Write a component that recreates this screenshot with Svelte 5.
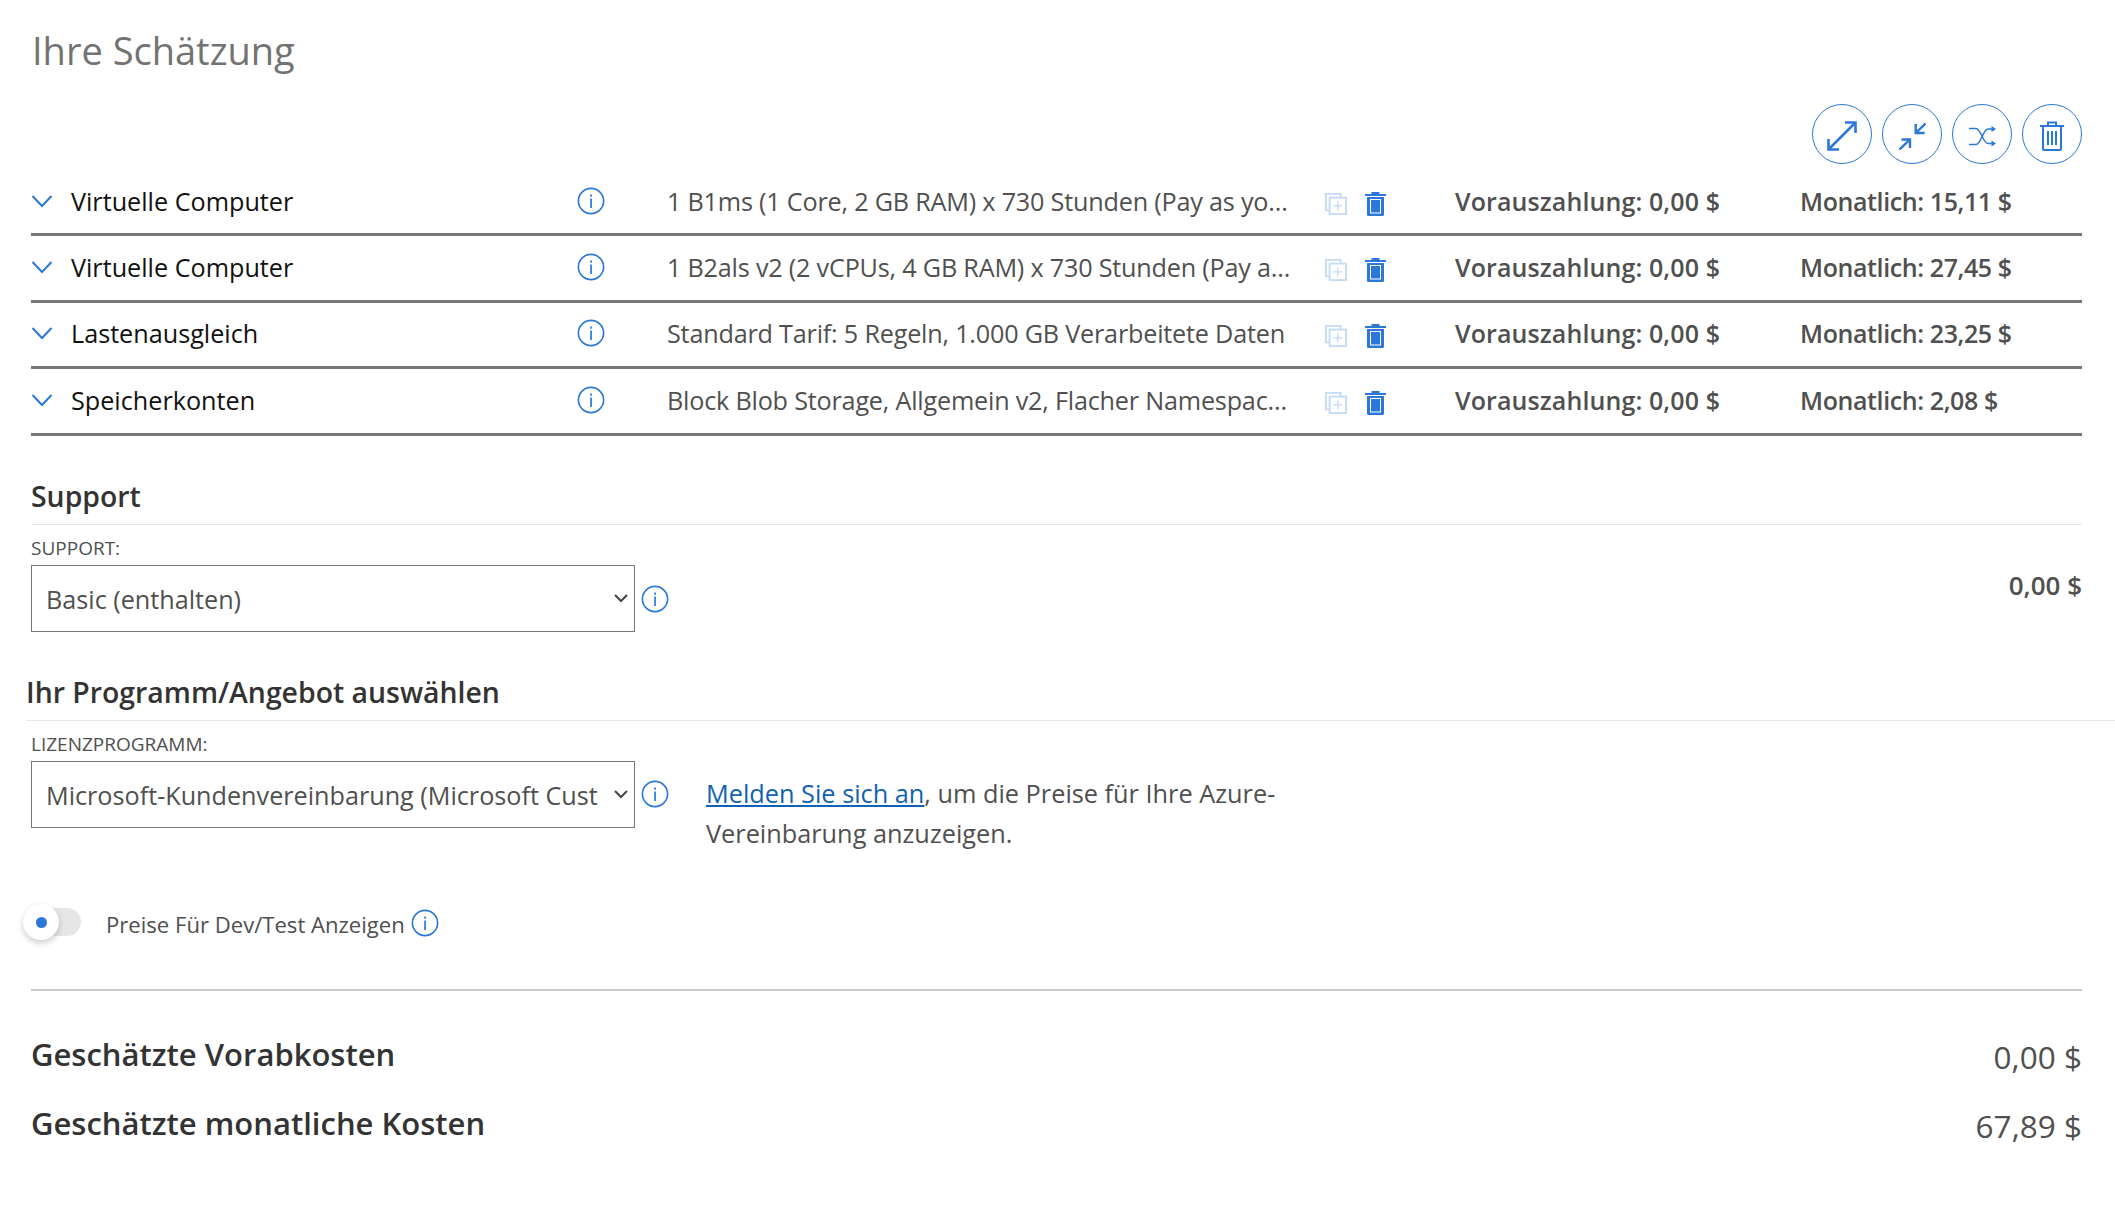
<script>
  const rows = [
    { name: "Virtuelle Computer", desc: "1 B1ms (1 Core, 2 GB RAM) x 730 Stunden (Pay as you go)", monthly: "15,11 $" },
    { name: "Virtuelle Computer", desc: "1 B2als v2 (2 vCPUs, 4 GB RAM) x 730 Stunden (Pay as you go)", monthly: "27,45 $" },
    { name: "Lastenausgleich", desc: "Standard Tarif: 5 Regeln, 1.000 GB Verarbeitete Daten", monthly: "23,25 $" },
    { name: "Speicherkonten", desc: "Block Blob Storage, Allgemein v2, Flacher Namespace, LRS", monthly: "2,08 $" },
  ];

  let devTest = $state(false);
</script>

{#snippet info(size)}
  <svg class="info" width={size} height={size} viewBox="0 0 28 28" fill="none">
    <circle cx="14" cy="14" r="12.6" stroke="#2b78d8" stroke-width="1.6" />
    <rect x="13.2" y="7.5" width="1.7" height="2.2" fill="#2b78d8" />
    <rect x="13.2" y="11.5" width="1.7" height="9.5" fill="#2b78d8" />
  </svg>
{/snippet}

{#snippet chevron()}
  <svg class="select-arrow" width="16" height="10" viewBox="0 0 16 10" fill="none">
    <path d="M2 2l6 6 6-6" stroke="#444" stroke-width="2" />
  </svg>
{/snippet}

<main class="page">
  <h1>Ihre Schätzung</h1>

  <div class="toolbar">
    <button class="round" aria-label="Alle erweitern">
      <svg width="30" height="30" viewBox="0 0 30 30" fill="none" stroke="#2b78d8" stroke-width="2.6">
        <path d="M1.5 28.5L28.5 1.5M18 1.5h10.5V12M1.5 18v10.5H12" />
      </svg>
    </button>
    <button class="round" aria-label="Alle reduzieren">
      <svg width="27" height="27" viewBox="0 0 27 27" fill="none" stroke="#2b78d8" stroke-width="2.4">
        <path d="M.5 26.5L11 16.5M2.5 16.5H11V25M26.5.5L16.7 10M16.7 1v9h9" />
      </svg>
    </button>
    <button class="round" aria-label="Neu anordnen">
      <svg width="27" height="21" viewBox="0 0 27 21" fill="none" stroke="#2b78d8" stroke-width="1.5">
        <path d="M0 2.500h7c5 0 7 15 12 15h4M0 18.500h7c5 0 7-15.500 12-15.500h4" />
        <path d="M22.500 0l4.500 3-4.500 3zM22.500 14.500l4.500 3-4.500 3z" fill="#2b78d8" stroke="none" />
      </svg>
    </button>
    <button class="round" aria-label="Alle löschen">
      <svg width="24" height="30" viewBox="0 0 24 30" fill="none" stroke="#2b78d8" stroke-width="2">
        <path d="M0 5h24M8 5V1.500h8V5M3 5v22.500a1.500 1.500 0 001.500 1.500h15a1.500 1.500 0 001.500-1.500V5M8 10v14M12 10v14M16 10v14" />
      </svg>
    </button>
  </div>

  <section class="rows">
    {#each rows as row}
      <div class="row">
        <svg class="toggle" width="22" height="14" viewBox="0 0 22 14" fill="none">
          <path d="M1.500 2l9.500 10 9.500-10" stroke="#2b78d8" stroke-width="2" />
        </svg>
        <span class="name">{row.name}</span>
        {@render info(28)}
        <span class="desc">{row.desc}</span>
        <svg class="clone" width="22" height="22" viewBox="0 0 24 24" fill="none" stroke="#c5daf5" stroke-width="2">
          <path d="M5 19H1V1h16v4" />
          <rect x="5" y="5" width="18" height="18" />
          <path d="M14 9v10M9 14h10" stroke-width="1.500" />
        </svg>
        <svg class="trash" width="21" height="24" viewBox="0 0 21 24">
          <path fill="#2b78d8" d="M0 2h6.500V0h8v2H21v2H0zM2 5h17v17.500a1.500 1.500 0 01-1.500 1.500h-14A1.500 1.500 0 012 22.500z" />
          <rect x="5.500" y="7.500" width="10" height="13.500" fill="none" stroke="#fff" stroke-width="1" />
        </svg>
        <strong class="upfront">Vorauszahlung: 0,00 $</strong>
        <strong class="monthly">Monatlich: {row.monthly}</strong>
      </div>
    {/each}
  </section>

  <section class="support">
    <h2>Support</h2>
    <label for="support">SUPPORT:</label>
    <div class="field">
      <div class="select-wrap">
        <select id="support">
          <option>Basic (enthalten)</option>
        </select>
        {@render chevron()}
      </div>
      <span class="info-nudge">{@render info(28)}</span>
      <strong class="support-price">0,00 $</strong>
    </div>
  </section>

  <section class="program">
    <h2>Ihr Programm/Angebot auswählen</h2>
    <label for="program">LIZENZPROGRAMM:</label>
    <div class="field top">
      <div class="select-wrap">
        <select id="program">
          <option>Microsoft-Kundenvereinbarung (Microsoft Cust</option>
        </select>
        {@render chevron()}
      </div>
      {@render info(28)}
      <p class="signin"><a href="#signin">Melden Sie sich an</a>, um die Preise für Ihre Azure-Vereinbarung anzuzeigen.</p>
    </div>
  </section>

  <div class="devtest">
    <button class="switch" class:on={devTest} aria-label="Preise für Dev/Test anzeigen" onclick={() => (devTest = !devTest)}>
      <span class="thumb"><span class="dot"></span></span>
    </button>
    <span class="devtest-label">Preise Für Dev/Test Anzeigen</span>
    {@render info(28)}
  </div>

  <section class="totals">
    <div class="total"><h3>Geschätzte Vorabkosten</h3><span>0,00 $</span></div>
    <div class="total"><h3>Geschätzte monatliche Kosten</h3><span>67,89 $</span></div>
  </section>
</main>

<style>
  :global(body) {
    background: #fff;
  }

  .page {
    font-family: "Open Sans", "Liberation Sans", sans-serif;
    padding: 0 33px 0 31px;
    color: #505050;
    height: 1213px;
    box-sizing: border-box;
    overflow: hidden;
  }

  h1 {
    margin: 0 0 0 1px;
    padding-top: 22px;
    font-size: 38px;
    line-height: 56px;
    font-weight: 400;
    color: #737373;
  }

  .toolbar {
    display: flex;
    justify-content: flex-end;
    gap: 10px;
    margin-top: 26px;
  }

  .round {
    width: 60px;
    height: 60px;
    padding: 0;
    border: 1.5px solid #2b78d8;
    border-radius: 50%;
    background: #fff;
    display: flex;
    align-items: center;
    justify-content: center;
  }

  .round svg {
    margin-top: 4px;
  }

  .rows {
    margin-top: 6px;
  }

  .row {
    display: grid;
    grid-template-columns: 40px 506px 90px 658px 40px 90px 345px 1fr;
    align-items: center;
    height: 66.4px;
    box-sizing: border-box;
    padding-bottom: 2px;
    border-bottom: 3px solid #767676;
    font-size: 25.2px;
  }

  .name {
    color: #111;
  }

  .info {
    display: block;
  }

  .row .info {
    justify-self: start;
  }

  .desc {
    overflow: hidden;
    white-space: nowrap;
    text-overflow: ellipsis;
    padding-right: 33px;
    letter-spacing: -0.2px;
  }

  .clone,
  .trash {
    margin-top: 6px;
  }

  strong {
    font-weight: 600;
  }

  .row strong {
    font-size: 25px;
  }

  .upfront {
    letter-spacing: 0.1px;
  }

  .monthly {
    letter-spacing: -0.4px;
  }

  h2 {
    margin: 0;
    font-size: 28.4px;
    font-weight: 600;
    line-height: 38px;
    color: #333;
    padding-bottom: 9px;
    border-bottom: 1px solid #e8e8e8;
  }

  label {
    display: block;
    font-size: 19px;
    line-height: 26px;
    margin-top: 10px;
    margin-bottom: 4px;
  }

  .support {
    margin-top: 41px;
  }

  .field {
    display: flex;
    align-items: center;
    gap: 6px;
  }

  .field.top {
    align-items: flex-start;
  }

  .field.top .info {
    margin-top: 19px;
  }

  .info-nudge {
    margin-top: 2px;
  }

  .select-wrap {
    position: relative;
    width: 604px;
  }

  select {
    appearance: none;
    width: 100%;
    height: 67px;
    padding: 2px 34px 0 14px;
    font: inherit;
    font-size: 25.2px;
    color: #505050;
    background: #fff;
    border: 1.5px solid #767676;
    border-radius: 0;
  }

  .select-arrow {
    position: absolute;
    right: 6px;
    top: 28px;
    pointer-events: none;
  }

  .support-price {
    margin-left: auto;
    margin-top: -27px;
    font-size: 26px;
  }

  .program {
    margin-top: 41px;
  }

  .program h2 {
    margin: 0 -33px 0 -5px;
  }

  .signin {
    margin: 12px 0 0 31px;
    width: 590px;
    font-size: 25.3px;
    line-height: 40px;
  }

  a {
    color: #0f62b5;
  }

  .devtest {
    display: flex;
    align-items: center;
    gap: 6px;
    margin-top: 53px;
    font-size: 22.1px;
  }

  .devtest-label {
    margin-top: 3px;
  }

  .devtest .info {
    margin-top: 2px;
  }

  .switch {
    position: relative;
    width: 42px;
    height: 28px;
    margin: 0 19px 0 8px;
    padding: 0;
    border: 0;
    border-radius: 14px;
    background: #e6e6e6;
  }

  .thumb {
    position: absolute;
    left: -16px;
    top: -4px;
    width: 36px;
    height: 36px;
    border-radius: 50%;
    background: #fff;
    box-shadow: 0 3px 6px rgba(0, 0, 0, 0.2);
    display: flex;
    align-items: center;
    justify-content: center;
  }

  .dot {
    width: 11px;
    height: 11px;
    border-radius: 50%;
    background: #2b78d8;
  }

  .totals {
    margin-top: 50px;
    border-top: 2px solid #c8c8c8;
    padding-top: 29px;
  }

  .total {
    display: flex;
    justify-content: space-between;
    align-items: center;
    height: 69px;
    font-size: 31.5px;
  }

  .total span {
    margin-top: 5px;
  }

  h3 {
    margin: 0;
    font-size: 31px;
    font-weight: 600;
    color: #333;
  }
</style>
